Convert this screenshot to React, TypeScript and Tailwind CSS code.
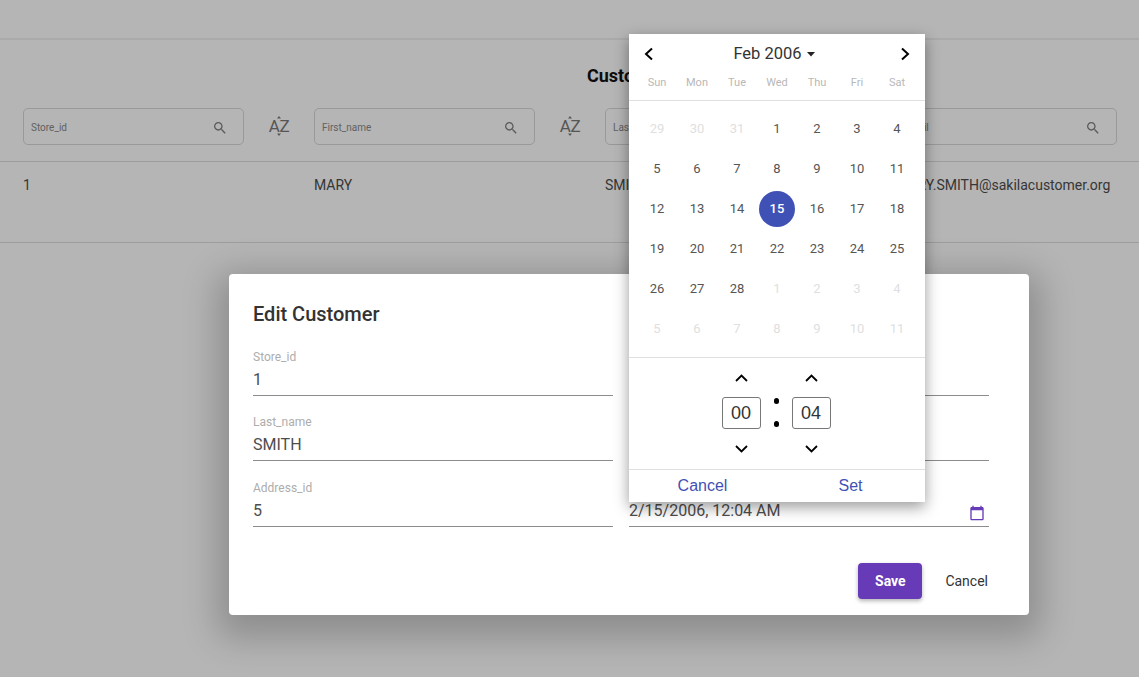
import React from "react";

const SEARCH = "M15.5 14h-.79l-.28-.27C15.41 12.59 16 11.11 16 9.5 16 5.91 13.09 3 9.5 3S3 5.91 3 9.5 5.91 16 9.5 16c1.61 0 3.09-.59 4.23-1.57l.27.28v.79l5 4.99L20.49 19l-4.99-5zm-6 0C7.01 14 5 11.99 5 9.5S7.01 5 9.5 5 14 7.01 14 9.5 11.99 14 9.5 14z";
const CAL = "M20 3h-1V1h-2v2H7V1H5v2H4c-1.1 0-2 .9-2 2v16c0 1.1.9 2 2 2h16c1.1 0 2-.9 2-2V5c0-1.1-.9-2-2-2zm0 18H4V8h16v13z";

function Chevron({ d, size = 16, w = 2 }: { d: string; size?: number; w?: number }) {
  return (
    <svg width={size} height={size} viewBox="0 0 16 16" fill="none" stroke="#000" strokeWidth={w}>
      <path d={d} />
    </svg>
  );
}

function Filter({ label, sort = true }: { label: string; sort?: boolean }) {
  return (
    <div className="flex items-center">
      <div className="w-[221px] h-[37px] border border-[#d8d8d8] rounded-[5px] flex items-center justify-between pl-[7px] pr-[15px]">
        <span className="text-[10px] text-[#8a8a8a] mt-[2px]">{label}</span>
        <svg width="16" height="16" viewBox="0 0 24 24" fill="#808080" className="mt-[3px]"><path d={SEARCH} /></svg>
      </div>
      {sort && (
        <div className="relative ml-[24px] w-[22px] h-[22px] flex items-center justify-center text-[17px] leading-none font-normal tracking-[-0.5px] text-[#7a7a7a]">
          AZ
          <svg width="6" height="20" viewBox="0 0 6 20" fill="#7a7a7a" className="absolute left-[8px] top-[0px]">
            <path d="M3 0l2 2.5H1zM3 20l-2-2.5h4z" />
          </svg>
        </div>
      )}
    </div>
  );
}

function Field({ label, value, className = "" }: { label: string; value: string; className?: string }) {
  return (
    <div className={`h-[57px] border-b border-[#8c8c8c] flex flex-col ${className}`}>
      <span className="text-[12px] leading-[14px] text-[#adadad] mt-[11px]">{label}</span>
      <span className="text-[16px] leading-[19px] text-[#4d4d4d] mt-[6px]">{value}</span>
    </div>
  );
}

const weeks = [
  [29, 30, 31, 1, 2, 3, 4],
  [5, 6, 7, 8, 9, 10, 11],
  [12, 13, 14, 15, 16, 17, 18],
  [19, 20, 21, 22, 23, 24, 25],
  [26, 27, 28, 1, 2, 3, 4],
  [5, 6, 7, 8, 9, 10, 11],
];

function Day({ n, week }: { n: number; week: number }) {
  const muted = (week === 0 && n > 20) || (week >= 4 && (week === 5 || n < 20));
  const selected = week === 2 && n === 15;
  return (
    <div className="h-[40px] flex items-center justify-center">
      {selected ? (
        <span className="w-[36px] h-[36px] rounded-full bg-[#3f51b5] text-white font-medium text-[13px] flex items-center justify-center">{n}</span>
      ) : (
        <span className={muted ? "text-[13px] text-[#e0e0e0]" : "text-[13px] text-[#555555]"}>{n}</span>
      )}
    </div>
  );
}

function Spinner({ value }: { value: string }) {
  return (
    <div className="flex flex-col items-center w-[39px]">
      <Chevron d="M3 11 8.5 5.5 14 11" w={1.8} />
      <div className="mt-[11px] mb-[11px] w-[39px] h-[32px] border border-[#777777] rounded-[3px] flex items-center justify-center text-[18px] text-[#333333] font-['Liberation_Sans',sans-serif]">
        {value}
      </div>
      <Chevron d="M3 6 8.5 11.5 14 6" w={1.8} />
    </div>
  );
}

export default function App() {
  return (
    <div className="relative w-[1139px] h-[677px] overflow-hidden bg-white font-['Roboto',sans-serif] antialiased">
      <div className="h-[40px] border-b-2 border-[#f0f0f0]" />
      <div className="h-[121px] flex flex-col">
        <div className="h-[54px] pl-[587px] pt-[24px] text-[18px] leading-[24px] font-bold text-[#111111]">Customers</div>
        <div className="mt-[14px] px-[23px] grid grid-cols-[291px_291px_291px_221px]">
          <Filter label="Store_id" />
          <Filter label="First_name" />
          <Filter label="Last_name" />
          <Filter label="Email" sort={false} />
        </div>
      </div>
      <div className="h-[82px] border-y border-[#dddddd] px-[23px] grid grid-cols-[291px_291px_291px_221px] pt-[15px] text-[14px] leading-[17px] text-[#4d4d4d]">
        <div>1</div>
        <div>MARY</div>
        <div>SMITH</div>
        <div>MARY.SMITH@sakilacustomer.org</div>
      </div>

      <div className="absolute inset-0 bg-[#000000]/[0.29]" />

      <div className="absolute left-[229px] top-[274px] w-[800px] h-[341px] bg-white rounded-[4px] shadow-[0_11px_35px_12px_rgba(0,0,0,0.22)] pt-[28px] px-[24px]">
        <h2 className="text-[20px] leading-[24px] font-medium text-[#333333]">Edit Customer</h2>
        <div className="mt-[13px] grid grid-cols-[360px_360px] gap-x-[16px] gap-y-[8px]">
          <Field label="Store_id" value="1" />
          <Field label="First_name" value="MARY" />
          <Field label="Last_name" value="SMITH" />
          <Field label="Email" value="MARY.SMITH@sakilacustomer.org" />
          <Field label="Address_id" value="5" className="mt-[1px]" />
          <div className="relative mt-[1px]">
            <Field label="Create_date" value="2/15/2006, 12:04 AM" />
            <svg width="16" height="16" viewBox="0 0 24 24" fill="#673ab7" className="absolute right-[4px] bottom-[6px]"><path d={CAL} /></svg>
          </div>
        </div>
        <div className="mt-[36px] pr-[17px] flex items-center justify-end">
          <button className="w-[64px] h-[36px] rounded-[4px] bg-[#673ab7] text-white text-[14px] font-bold shadow-[0_2px_4px_rgba(0,0,0,0.3)]">Save</button>
          <button className="ml-[23px] text-[14px] font-normal text-[#333333]">Cancel</button>
        </div>
      </div>

      <div className="absolute left-[629px] top-[34px] w-[296px] h-[468px] bg-white shadow-[0_5px_14px_rgba(0,0,0,0.4)] flex flex-col">
        <div className="h-[40px] px-[12px] flex items-center justify-between">
          <Chevron d="M11 2.5 5 8l6 5.5" />
          <div className="flex items-center text-[16.5px] text-[#333333] mr-[6px]">
            Feb 2006
            <svg width="8" height="5" viewBox="0 0 8 5" fill="#222222" className="ml-[5px]"><path d="M0 0h8L4 4.5z" /></svg>
          </div>
          <Chevron d="M5 2.5 11 8l-6 5.5" />
        </div>
        <div className="h-[27px] border-b border-[#e0e0e0] px-[8px] grid grid-cols-7 text-[11px] text-[#b8b8b8] text-center pt-[1px]">
          {["Sun", "Mon", "Tue", "Wed", "Thu", "Fri", "Sat"].map((d) => <div key={d}>{d}</div>)}
        </div>
        <div className="px-[8px] pt-[8px] pb-[8px] grid grid-cols-7 border-b border-[#e0e0e0]">
          {weeks.map((w, i) => w.map((n, j) => <Day key={`${i}-${j}`} n={n} week={i} />))}
        </div>
        <div className="h-[112px] border-b border-[#e0e0e0] flex justify-center pt-[12px] gap-[10px] pr-[2px]">
          <Spinner value="00" />
          <div className="w-[11px] flex flex-col items-center pt-[28px] pl-[1px]">
            <span className="w-[5px] h-[6px] rounded-full bg-black" />
            <span className="w-[5px] h-[6px] rounded-full bg-black mt-[17px]" />
          </div>
          <Spinner value="04" />
        </div>
        <div className="flex-1 grid grid-cols-2 text-[16px] text-[#3f51b5] font-['Liberation_Sans',sans-serif] text-center items-center">
          <button className="pr-[1px]">Cancel</button>
          <button className="pr-[1px]">Set</button>
        </div>
      </div>
    </div>
  );
}
